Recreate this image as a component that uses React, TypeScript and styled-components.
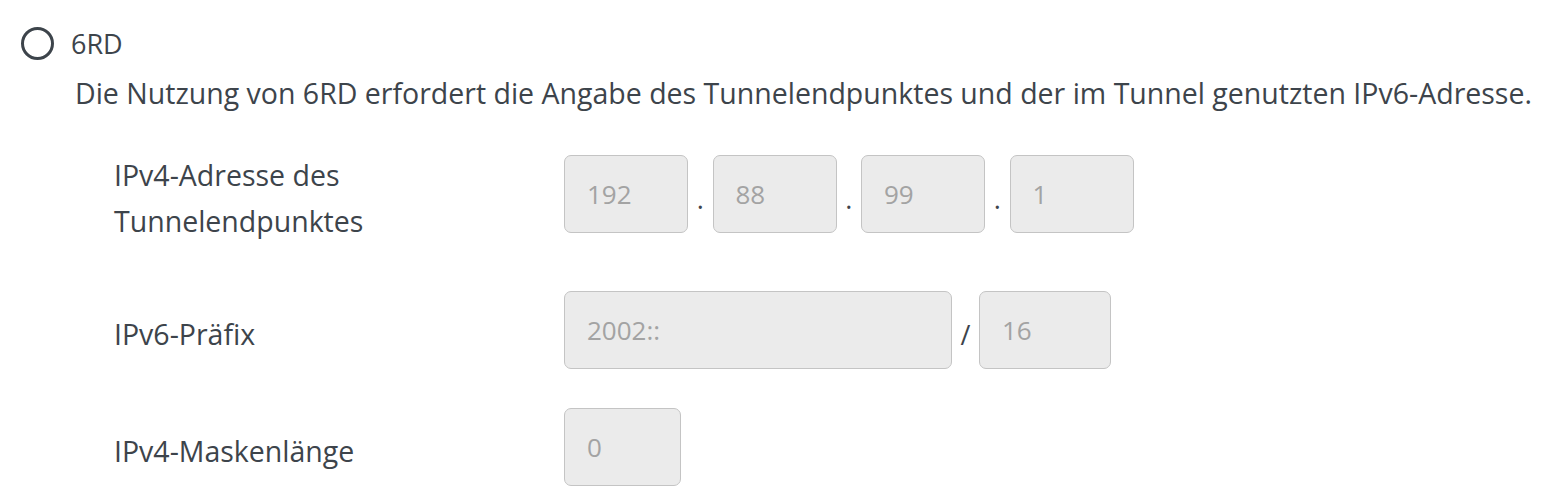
import styled, { createGlobalStyle } from 'styled-components';

const GlobalStyle = createGlobalStyle`
    html, body {
        margin: 0;
        padding: 0;
        background: #ffffff;
    }

    body {
        font-family: "Open Sans", "Noto Sans", sans-serif;
        color: #3d444b;
    }
`;

const StyledPage = styled.div`
    padding: 25px 0 0 21px;
    width: 1531px;
`;

const StyledRadioRow = styled.label`
    display: flex;
    align-items: center;
    gap: 17px;
    height: 36px;
    font-size: 27px;
`;

const StyledRadio = styled.span`
    box-sizing: border-box;
    width: 33px;
    height: 33px;
    border: 3px solid #3d444b;
    border-radius: 50%;
`;

const StyledDescription = styled.p`
    margin: 14px 0 0 54px;
    font-size: 28.5px;
    line-height: 36px;
    white-space: nowrap;
`;

const StyledRows = styled.div`
    display: flex;
    flex-direction: column;
    margin: 33px 0 0 93px;
`;

const StyledRow = styled.div<{ $gapAfter: number }>`
    display: grid;
    grid-template-columns: 450px auto;
    align-items: center;
    margin-bottom: ${props => props.$gapAfter}px;
`;

const StyledLabel = styled.div`
    font-size: 28.5px;
    line-height: 46px;
    padding-top: 8px;
`;

const StyledFields = styled.div`
    display: flex;
    align-items: center;
`;

const StyledInput = styled.div<{ $width: number }>`
    box-sizing: border-box;
    width: ${props => props.$width}px;
    height: 78px;
    padding: 0 22px;
    display: flex;
    align-items: center;
    background: #ebebeb;
    border: 1px solid #c4c4c4;
    border-radius: 7px;
    font-family: "Open Sans", sans-serif;
    font-size: 26px;
    color: #a3a3a3;
`;

const StyledSeparator = styled.span<{ $width: number }>`
    width: ${props => props.$width}px;
    text-align: center;
    font-size: 27px;
    color: #3d444b;
    padding-top: 8px;
`;

const ipv4Parts = ['192', '88', '99', '1'];

const App = () => {
    return (
        <StyledPage>
            <GlobalStyle />
            <StyledRadioRow>
                <StyledRadio />
                6RD
            </StyledRadioRow>
            <StyledDescription>
                Die Nutzung von 6RD erfordert die Angabe des Tunnelendpunktes und der im Tunnel genutzten IPv6-Adresse.
            </StyledDescription>
            <StyledRows>
                <StyledRow $gapAfter={47}>
                    <StyledLabel>
                        IPv4-Adresse des
                        <br />
                        Tunnelendpunktes
                    </StyledLabel>
                    <StyledFields>
                        {ipv4Parts.map((part, i) => (
                            <StyledFields key={part}>
                                {i > 0 && <StyledSeparator $width={24.5}>.</StyledSeparator>}
                                <StyledInput $width={124}>{part}</StyledInput>
                            </StyledFields>
                        ))}
                    </StyledFields>
                </StyledRow>
                <StyledRow $gapAfter={39}>
                    <StyledLabel>IPv6-Präfix</StyledLabel>
                    <StyledFields>
                        <StyledInput $width={388}>2002::</StyledInput>
                        <StyledSeparator $width={27}>/</StyledSeparator>
                        <StyledInput $width={132}>16</StyledInput>
                    </StyledFields>
                </StyledRow>
                <StyledRow $gapAfter={0}>
                    <StyledLabel>IPv4-Maskenlänge</StyledLabel>
                    <StyledFields>
                        <StyledInput $width={117}>0</StyledInput>
                    </StyledFields>
                </StyledRow>
            </StyledRows>
        </StyledPage>
    );
};

export default App;
